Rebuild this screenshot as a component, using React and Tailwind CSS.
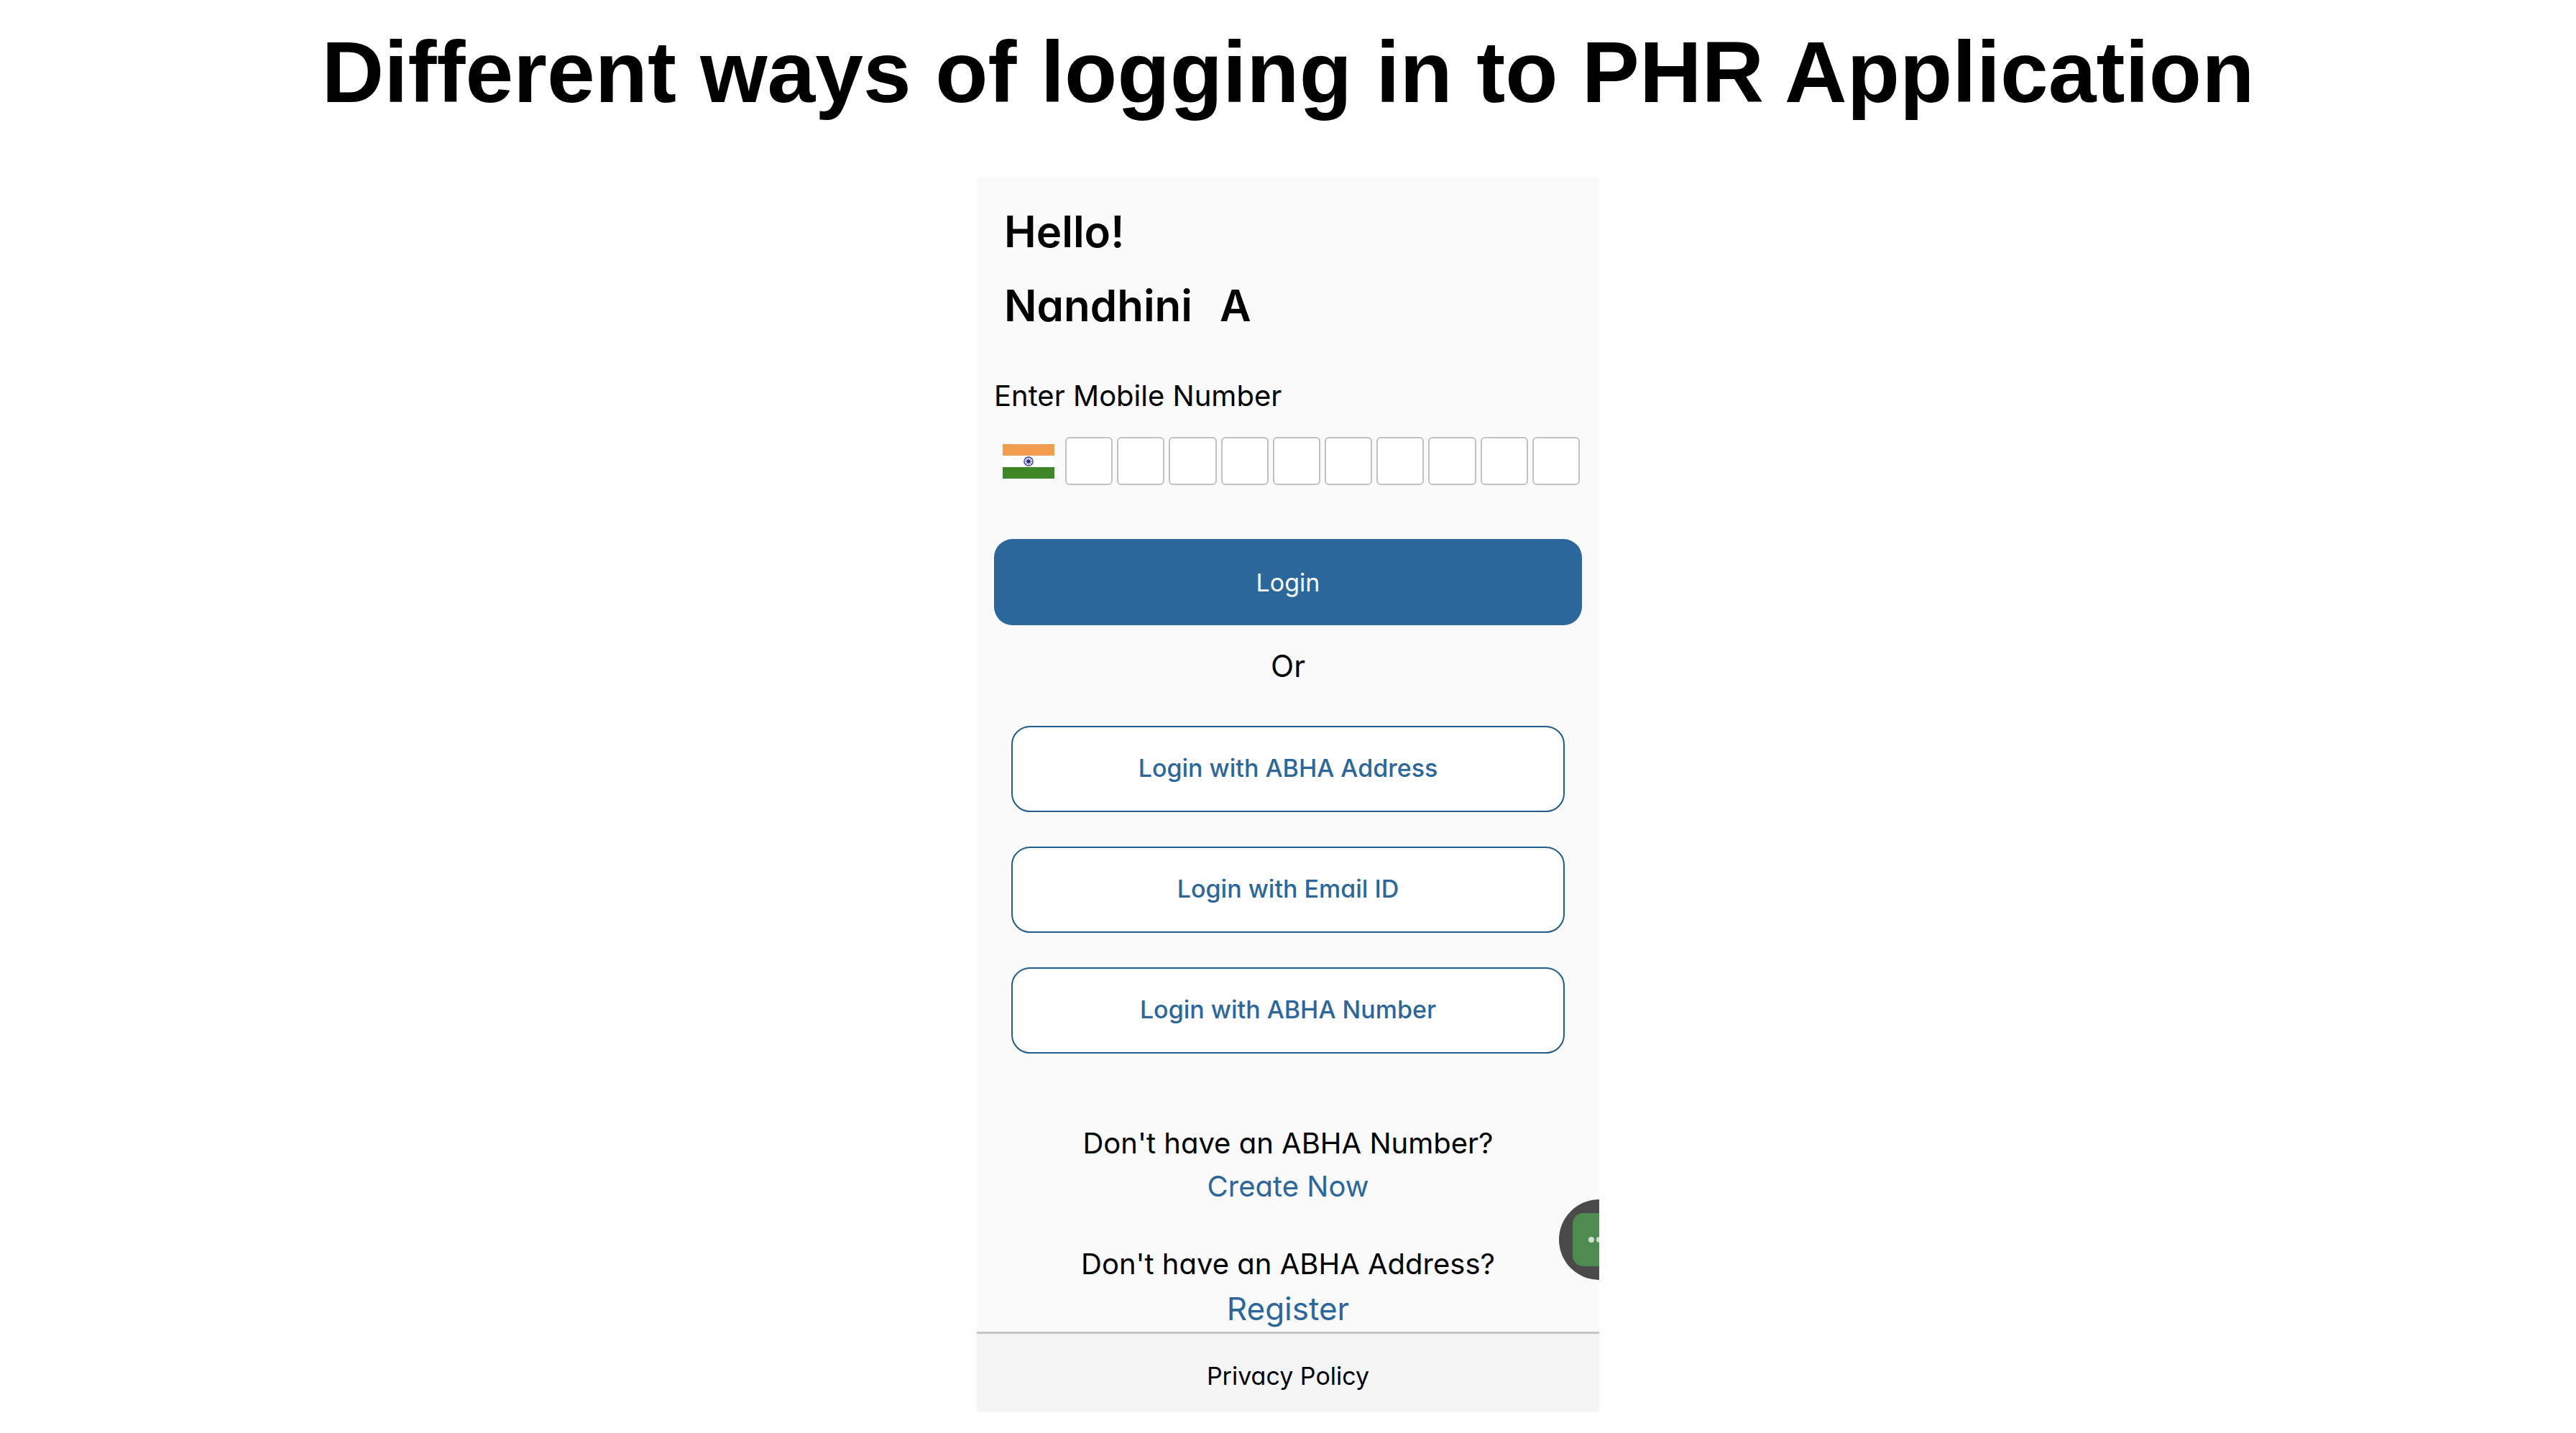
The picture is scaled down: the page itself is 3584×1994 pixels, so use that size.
const loginOptions = ["Login with ABHA Address", "Login with Email ID", "Login with ABHA Number"];
const digits = Array.from({ length: 10 }, (_, i) => i + 1);

function IndiaFlag() {
  const spokes = Array.from({ length: 4 }, (_, i) => i * 45);
  return (
    <svg viewBox="0 0 72 48" className="h-12 w-[72px] shrink-0" role="img" aria-label="India">
      <rect width="72" height="48" fill="#ffffff" />
      <rect width="72" height="16" fill="#f19d4f" />
      <rect y="32" width="72" height="16" fill="#3f8628" />
      <circle cx="36" cy="24" r="6.2" fill="#dcdcf0" stroke="#34348a" strokeWidth="1.2" />
      {spokes.map((angle) => (
        <path key={angle} d="M30 24H42" stroke="#34348a" strokeWidth="0.6" transform={`rotate(${angle} 36 24)`} />
      ))}
      <circle cx="36" cy="24" r="2.6" fill="#2b2b85" />
    </svg>
  );
}

function ChatBubble() {
  return (
    <button
      type="button"
      aria-label="Open assistant"
      className="absolute -right-14 bottom-[184px] h-28 w-28 rounded-full"
    >
      <svg viewBox="0 0 112 112" className="h-full w-full">
        <circle cx="56" cy="56" r="56" fill="#4a4a4a" />
        <rect x="19" y="19" width="74" height="74" rx="15" fill="#4d8b50" />
        <circle cx="45" cy="56" r="4" fill="#cfe2d0" />
        <circle cx="56" cy="56" r="4" fill="#cfe2d0" />
        <circle cx="67" cy="56" r="4" fill="#cfe2d0" />
      </svg>
    </button>
  );
}

export default function App() {
  return (
    <div className="min-h-screen bg-white text-black">
      <h1 className="pt-[30px] text-center font-['Liberation_Sans',Arial,sans-serif] text-[120px] leading-[140px] font-bold">
        Different ways of logging in to PHR Application
      </h1>

      <main className="relative mx-auto mt-[76px] w-full max-w-[866px] overflow-hidden bg-[#fafafa] font-['Inter',sans-serif] [font-feature-settings:'cv11']">
        <div className="px-6 pt-10">
          <div className="px-[14px] text-[60px] leading-[72px] font-semibold">
            <p>Hello!</p>
            <p className="mt-[31px] flex gap-[38px]">
              <span>Nandhini</span> <span>A</span>
            </p>
          </div>

          <form>
            <fieldset className="w-full min-w-0">
              <legend className="pt-[60px] text-[40px] leading-[60px]">Enter Mobile Number</legend>
              <div className="mt-[27px] flex items-center pr-[3px] pl-3">
                <IndiaFlag />
                <div className="ml-[15px] grid min-w-0 flex-1 grid-cols-10 gap-1.5">
                  {digits.map((n) => (
                    <input
                      key={n}
                      type="text"
                      inputMode="numeric"
                      maxLength={1}
                      aria-label={`Mobile number digit ${n}`}
                      className="h-[67px] w-full min-w-0 rounded-md border-2 border-[#c2c2c2] bg-white text-center text-[34px]"
                    />
                  ))}
                </div>
              </div>
            </fieldset>
            <button
              type="submit"
              className="mt-[75px] h-[120px] w-full rounded-[26px] bg-[#2b679a] text-[34px] text-white"
            >
              Login
            </button>
          </form>

          <p className="mt-[27px] text-center text-[42px] leading-[60px]">Or</p>

          <div className="mt-[53px] flex flex-col gap-12 px-6">
            {loginOptions.map((label) => (
              <button
                key={label}
                type="button"
                className="h-[120px] rounded-[26px] border-2 border-[#1f5d90] bg-white pb-1 text-[34px] font-medium text-[#2b679a]"
              >
                {label}
              </button>
            ))}
          </div>

          <div className="mt-[95px] text-center text-[40px] leading-[60px]">
            <p>Don't have an ABHA Number?</p>
            <a href="#create" className="text-[#2b679a]">Create Now</a>
          </div>
          <div className="mt-12 text-center text-[40px] leading-[60px]">
            <p>Don't have an ABHA Address?</p>
            <a href="#register" className="block text-[44px] leading-[64px] text-[#2b679a]">Register</a>
          </div>
        </div>

        <footer className="border-t-[3px] border-[#c4c4c4] bg-[#f5f5f5] pt-[34px] pb-[25px] text-center text-[34px] leading-[50px]">
          <a href="#privacy">Privacy Policy</a>
        </footer>

        <ChatBubble />
      </main>
    </div>
  );
}
